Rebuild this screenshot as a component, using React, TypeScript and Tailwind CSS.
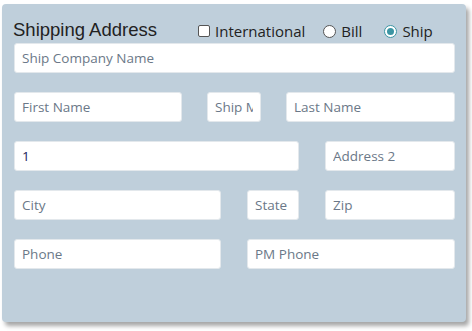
import React from "react";

const Field = ({
  w,
  placeholder,
  value,
}: {
  w: string;
  placeholder?: string;
  value?: string;
}) => (
  <input
    readOnly
    defaultValue={value}
    placeholder={placeholder}
    className={`${w} h-[30px] shrink-0 rounded-[3px] border border-[#e3e8ec] bg-white px-[7px] text-[13.5px] text-[#1b1b5a] placeholder:text-[#6b7888] outline-none`}
    style={{ fontFamily: "'Open Sans', 'Noto Sans', sans-serif" }}
  />
);

const Radio = ({ checked }: { checked?: boolean }) => (
  <span
    className={`inline-flex size-[13px] items-center justify-center rounded-full border ${
      checked ? "border-[#3c95a3]" : "border-[#555]"
    } bg-white`}
  >
    {checked && <span className="size-[7px] rounded-full bg-[#3c95a3]" />}
  </span>
);

const App = () => {
  return (
    <div className="h-[331px] w-[472px] bg-white pl-[2px] pt-[4px]">
      <div className="h-[318px] w-[464px] rounded-[4px] bg-[#bfcfdb] pl-[12px] pr-[11px] shadow-[3px_4px_4px_rgba(0,0,0,0.35)]">
        <div
          className="flex h-[39px] items-end pb-[2px] text-[#222]"
          style={{ fontFamily: "'Open Sans', 'Noto Sans', sans-serif" }}
        >
          <h2
            className="-ml-[1px] text-[18.5px] leading-[22px] text-[#222]"
            style={{ fontFamily: "'Liberation Sans', Arial, sans-serif" }}
          >
            Shipping Address
          </h2>
          <label className="ml-[41px] flex items-center gap-[5px] text-[15px] leading-[20px]">
            <span className="size-[12px] rounded-[2px] border border-[#555] bg-white" />
            International
          </label>
          <label className="ml-[18px] flex items-center gap-[5px] text-[15px] leading-[20px]">
            <Radio />
            Bill
          </label>
          <label className="ml-[22px] flex items-center gap-[5px] text-[15px] leading-[20px]">
            <Radio checked />
            Ship
          </label>
        </div>
        <div className="flex flex-col gap-[19px]">
          <Field w="w-[441px]" placeholder="Ship Company Name" />
          <div className="flex gap-[25px]">
            <Field w="w-[168px]" placeholder="First Name" />
            <Field w="w-[54px]" placeholder="Ship MI" />
            <Field w="w-[169px]" placeholder="Last Name" />
          </div>
          <div className="flex gap-[26px]">
            <Field w="w-[285px]" value="1" placeholder="Address 1" />
            <Field w="w-[130px]" placeholder="Address 2" />
          </div>
          <div className="flex gap-[26px]">
            <Field w="w-[207px]" placeholder="City" />
            <Field w="w-[52px]" placeholder="State" />
            <Field w="w-[130px]" placeholder="Zip" />
          </div>
          <div className="flex gap-[26px]">
            <Field w="w-[207px]" placeholder="Phone" />
            <Field w="w-[208px]" placeholder="PM Phone" />
          </div>
        </div>
      </div>
    </div>
  );
};

export default App;
